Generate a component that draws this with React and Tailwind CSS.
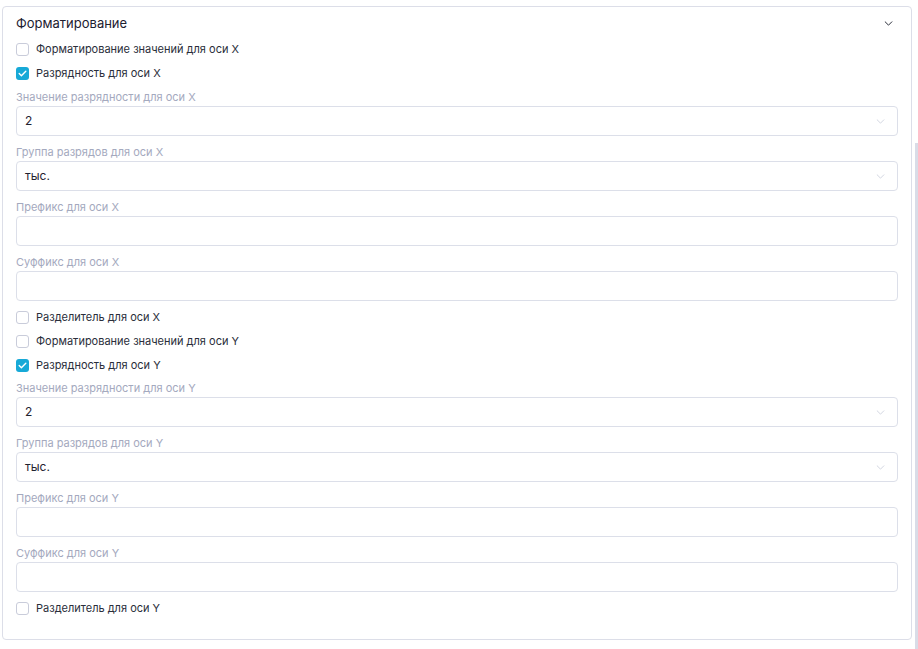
import React from 'react';

const font = { fontFamily: 'Inter, "Noto Sans", sans-serif' };

function Chevron({ className, stroke = 1.1 }) {
  return (
    <svg width="10" height="6" viewBox="0 0 10 6" fill="none" className={className}>
      <path d="M1 1l4 4 4-4" stroke="currentColor" strokeWidth={stroke} strokeLinecap="round" strokeLinejoin="round" />
    </svg>
  );
}

function Check({ label, checked }) {
  return (
    <div className="flex h-[24px] items-center">
      {checked ? (
        <span className="flex h-[13px] w-[13px] items-center justify-center rounded-[3px] bg-[#17a9d7]">
          <svg width="9" height="7" viewBox="0 0 9 7" fill="none">
            <path d="M1.2 3.6l2.2 2.1L7.8 1.3" stroke="white" strokeWidth="1.4" strokeLinecap="round" strokeLinejoin="round" />
          </svg>
        </span>
      ) : (
        <span className="h-[13px] w-[13px] rounded-[3px] border border-[#c9ccda] bg-white" />
      )}
      <span className="ml-[7px] text-[11px] leading-[14px] text-[#2a2e3a]">{label}</span>
    </div>
  );
}

function Field({ label, value, select }) {
  return (
    <div className="flex flex-col">
      <span className="text-[11px] leading-[14px] text-[#a4a9be]">{label}</span>
      <div className="mt-[2px] flex h-[30px] items-center justify-between rounded-[4px] border border-[#dcdfe9] bg-white pl-[8px] pr-[12px]">
        <span className="text-[12px] text-[#1f2230]">{value}</span>
        {select && <Chevron className="h-[5px] w-[9px] text-[#cfd2de]" />}
      </div>
    </div>
  );
}

function Fields({ children, top = 'pt-[5px]' }) {
  return <div className={`flex flex-col gap-[9px] pb-[4px] ${top}`}>{children}</div>;
}

export default function App() {
  return (
    <div className="flex h-[649px] w-[918px] bg-white" style={font}>
      <div className="ml-[2px] mt-[6px] flex h-[634px] w-[910px] flex-col rounded-[4px] border border-[#dcdee8] px-[13px]">
        <div className="flex items-center justify-between pb-[6px] pt-[8px]">
          <span className="text-[13px] leading-[16px] text-[#1d2030]">Форматирование</span>
          <Chevron className="mr-[5px] h-[5px] w-[9px] text-[#2a2e3a]" stroke={1.2} />
        </div>

        <Check label="Форматирование значений для оси X" />
        <Check label="Разрядность для оси X" checked />
        <Fields>
          <Field label="Значение разрядности для оси X" value="2" select />
          <Field label="Группа разрядов для оси X" value="тыс." select />
          <Field label="Префикс для оси X" value="" />
          <Field label="Суффикс для оси X" value="" />
        </Fields>
        <Check label="Разделитель для оси X" />
        <Check label="Форматирование значений для оси Y" />
        <Check label="Разрядность для оси Y" checked />
        <Fields top="pt-[4px]">
          <Field label="Значение разрядности для оси Y" value="2" select />
          <Field label="Группа разрядов для оси Y" value="тыс." select />
          <Field label="Префикс для оси Y" value="" />
          <Field label="Суффикс для оси Y" value="" />
        </Fields>
        <Check label="Разделитель для оси Y" />
      </div>
      <div className="ml-[3px] mt-[143px] h-[506px] w-[3px] bg-[#d9dce7]" />
    </div>
  );
}
